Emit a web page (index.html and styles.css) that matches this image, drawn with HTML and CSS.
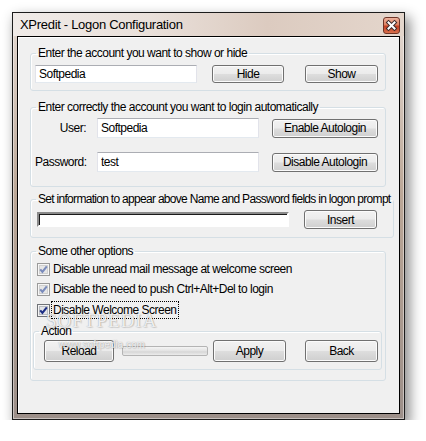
FILE: index.html
```html
<!DOCTYPE html>
<html>
<head>
  <meta charset="utf-8" />
  <title>XPredit - Logon Configuration</title>
  <link rel="stylesheet" href="styles.css">
</head>
<body>
  <div class="window">
    <div class="titlebar">
      <span class="title">XPredit - Logon Configuration</span>
      <span class="close">
        <svg width="15" height="15" viewBox="0 0 15 15">
          <path d="M4.5 4.5 L10.5 10.5 M10.5 4.5 L4.5 10.5" stroke="#3a2a2a" stroke-width="4" stroke-linecap="square"/>
          <path d="M4.5 4.5 L10.5 10.5 M10.5 4.5 L4.5 10.5" stroke="#ffffff" stroke-width="2" stroke-linecap="square"/>
        </svg>
      </span>
    </div>

    <div class="client">
      <!-- show / hide account -->
      <fieldset class="group g-account">
        <legend>Enter the account you want to show or hide</legend>
        <div class="row">
          <input class="edit w-name" type="text" value="Softpedia">
          <button class="btn b-hide">Hide</button>
          <button class="btn b-show">Show</button>
        </div>
      </fieldset>

      <!-- autologin -->
      <fieldset class="group g-login">
        <legend>Enter correctly the account you want to login automatically</legend>
        <div class="row login-row">
          <label class="lbl">User:</label>
          <input class="edit w-login" type="text" value="Softpedia">
          <button class="btn b-auto">Enable Autologin</button>
        </div>
        <div class="row login-row second">
          <label class="lbl">Password:</label>
          <input class="edit w-login" type="text" value="test">
          <button class="btn b-auto">Disable Autologin</button>
        </div>
      </fieldset>

      <!-- logon prompt text -->
      <fieldset class="group g-info">
        <legend>Set information to appear above Name and Password fields in logon prompt</legend>
        <div class="row info-row">
          <input class="sunken" type="text" value="">
          <button class="btn b-insert">Insert</button>
        </div>
      </fieldset>

      <!-- other options -->
      <fieldset class="group g-options">
        <legend>Some other options</legend>
        <div class="check-row">
          <svg class="cb" width="13" height="13" viewBox="0 0 13 13">
            <rect x="0.5" y="0.5" width="12" height="12" fill="#f6f6f6" stroke="#9a9a9a"/>
            <rect x="2.5" y="2.5" width="8" height="8" fill="#e6e6e6" stroke="#cfcfcf"/>
            <path d="M3.2 6.4 L5.4 8.8 L9.8 3.4" stroke="#7a8bbb" stroke-width="2.1" fill="none"/>
          </svg>
          <span>Disable unread mail message at welcome screen</span>
        </div>
        <div class="check-row">
          <svg class="cb" width="13" height="13" viewBox="0 0 13 13">
            <rect x="0.5" y="0.5" width="12" height="12" fill="#f6f6f6" stroke="#9a9a9a"/>
            <rect x="2.5" y="2.5" width="8" height="8" fill="#e6e6e6" stroke="#cfcfcf"/>
            <path d="M3.2 6.4 L5.4 8.8 L9.8 3.4" stroke="#7a8bbb" stroke-width="2.1" fill="none"/>
          </svg>
          <span>Disable the need to push Ctrl+Alt+Del to login</span>
        </div>
        <div class="check-row third">
          <svg class="cb" width="13" height="13" viewBox="0 0 13 13">
            <rect x="0.5" y="0.5" width="12" height="12" fill="#f4f4f4" stroke="#6f7277"/>
            <rect x="2.5" y="2.5" width="8" height="8" fill="#e2e4e8" stroke="#b9bcc2"/>
            <path d="M3.2 6.4 L5.4 8.8 L9.8 3.4" stroke="#1d2f86" stroke-width="2.1" fill="none"/>
          </svg>
          <span class="focus">Disable Welcome Screen</span>
        </div>

        <fieldset class="group g-action">
          <legend>Action</legend>
          <div class="row action-row">
            <button class="btn b-reload">Reload</button>
            <div class="progress"></div>
            <button class="btn b-apply">Apply</button>
            <button class="btn b-back">Back</button>
          </div>
        </fieldset>
      </fieldset>

      <div class="watermark">
        <div class="wm-big">SOFTPEDIA</div>
        <div class="wm-small">www.softpedia.com</div>
      </div>
    </div>
  </div>
</body>
</html>
```

FILE: styles.css
```css
/* XP-style dialog, drawn on a white page with a soft drop shadow */

html, body {
  margin: 0;
  padding: 0;
  background: #ffffff;
}

body {
  padding: 12px 0 0 12px;
  font-family: "Liberation Sans", Arial, sans-serif;
  font-size: 12px;
  letter-spacing: -0.5px;
  color: #000;
}

.window {
  box-sizing: border-box;
  width: 393px;
  height: 408px;
  display: flex;
  flex-direction: column;
  padding: 0 4px 5px 4px;
  border: 1px solid #1c1c1c;
  background: linear-gradient(180deg, #ece6e2 0, #e0d4cc 24px, #bba797 45%, #9c8f89 100%);
  box-shadow: 4px 6px 12px 1px rgba(0,0,0,0.45), inset 0 0 0 1px rgba(255,255,255,0.45);
}

.titlebar {
  height: 23px;
  display: flex;
  align-items: flex-start;
  justify-content: space-between;
  margin: 0 -4px 0 -4px;
  padding: 0 4px 0 7px;
  background: linear-gradient(90deg, #f0ebe8 0%, #e9e0da 35%, #dccbc0 65%, #e4d6cc 100%);
}

.title {
  font-family: "Liberation Sans", Arial, sans-serif;
  font-size: 13px;
  letter-spacing: -0.3px;
  line-height: 23px;
}

.close {
  width: 17px;
  height: 17px;
  margin-top: 4px;
  box-sizing: border-box;
  border: 1px solid #6e3426;
  border-radius: 3px;
  background: linear-gradient(180deg, #eeb39e 0%, #de8262 45%, #c43f22 55%, #d8704c 100%);
  display: flex;
}

.client {
  flex: 1;
  position: relative;
  border: 1px solid #000;
  background: #f0f0f0;
  box-shadow: inset 1px 1px 0 #ffffff;
  overflow: hidden;
}

/* group boxes */
.group {
  box-sizing: border-box;
  width: 356px;
  margin: 0 0 0 12px;
  padding: 0;
  border: 1px solid #d5dfe5;
  border-radius: 3px;
  box-shadow: inset 1px 1px 0 #ffffff;
}

.group legend {
  margin-left: 5px;
  padding: 0 2px;
  line-height: 13px;
  white-space: nowrap;
}

.row {
  display: flex;
  align-items: center;
}

.g-account { margin-top: 10px; padding: 5px 0 7px 0; }
.g-account .row { height: 18px; margin-left: 4px; }

.g-login { margin-top: 10px; padding: 4px 0 14px 0; }
.login-row { height: 20px; margin-left: 4px; }
.login-row.second { margin-top: 14px; }

.g-info { margin-top: 6px; padding: 4px 0 8px 0; }
.g-info legend { letter-spacing: -0.7px; }
.info-row { height: 19px; margin-left: 6px; }

.g-options { margin-top: 7px; padding: 1px 0 10px 0; }

.lbl {
  width: 51px;
  text-align: right;
}

/* text boxes */
.edit {
  box-sizing: border-box;
  height: 20px;
  margin: 0;
  padding: 0 3px;
  border: 1px solid #e2e3ea;
  border-top-color: #abadb3;
  border-bottom-color: #e3e9ef;
  background: #fff;
  font: inherit;
  letter-spacing: inherit;
  color: #000;
  outline: none;
}

.w-name { width: 162px; height: 18px; }
.w-login { width: 162px; margin-left: 11px; }

.sunken {
  box-sizing: border-box;
  width: 252px;
  height: 15px;
  margin: 0;
  padding: 0;
  border: 2px solid;
  border-color: #8a8a8a #ffffff #ffffff #8a8a8a;
  box-shadow: inset 1px 1px 0 #1a1a1a;
  outline: none;
  background: #fff;
}

/* push buttons */
.btn {
  box-sizing: border-box;
  height: 18px;
  margin: 0;
  padding: 0;
  border: 1px solid #707070;
  border-radius: 3px;
  background: linear-gradient(180deg, #f2f2f2 0%, #ebebeb 48%, #dddddd 52%, #cfcfcf 100%);
  box-shadow: inset 0 0 0 1px #fbfbfb;
  font: inherit;
  letter-spacing: inherit;
  color: #000;
}

.b-hide { width: 72px; margin-left: 15px; }
.b-show { width: 73px; margin-left: 21px; }
.b-auto { width: 106px; height: 19px; margin-left: 13px; }
.b-insert { width: 73px; height: 19px; margin-left: 15px; }

/* check boxes */
.check-row {
  display: flex;
  align-items: center;
  height: 20px;
  margin-left: 6px;
}

.check-row.third { height: 22px; }

.cb {
  flex: none;
  margin-right: 3px;
}

.focus {
  outline: 1px dotted #000;
  outline-offset: 1px;
}

/* action group nested inside options */
.g-action {
  width: 349px;
  margin: 4px 0 0 2px;
  padding: 2px 0 7px 0;
}

.action-row { height: 22px; margin-left: 10px; }

.b-reload { width: 70px; height: 22px; }
.b-apply { width: 73px; height: 22px; margin-left: 5px; }
.b-back { width: 73px; height: 22px; margin-left: 19px; }

.progress {
  box-sizing: border-box;
  width: 86px;
  height: 10px;
  margin-left: 8px;
  border: 1px solid #b4b4b4;
  border-radius: 2px;
  background: linear-gradient(180deg, #f4f4f4 0%, #e2e2e2 50%, #d6d6d6 60%, #ececec 100%);
}

/* faint site watermark over the options area */
.watermark {
  position: absolute;
  left: 28px;
  top: 274px;
  pointer-events: none;
  text-align: center;
  color: rgba(255,255,255,0.85);
  text-shadow: 0 0 1px rgba(60,60,60,0.5), 1px 1px 1px rgba(0,0,0,0.12);
}

.wm-big {
  font-family: "Liberation Serif", serif;
  font-size: 19px;
  letter-spacing: 1px;
  line-height: 20px;
}

.wm-small {
  font-size: 10px;
  letter-spacing: 0;
  margin-top: 8px;
}
```
